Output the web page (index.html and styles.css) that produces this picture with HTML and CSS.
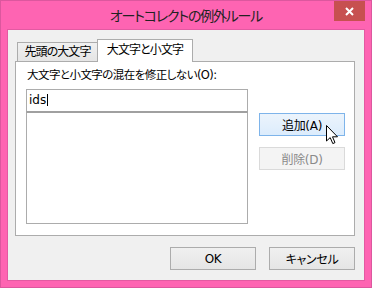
FILE: index.html
```html
<!DOCTYPE html>
<html lang="ja">
<head>
  <meta charset="UTF-8">
  <title>オートコレクトの例外ルール</title>
  <link rel="stylesheet" href="styles.css">
</head>
<body>

<div class="window">
  <div class="titlebar">
    <span></span>
    <div class="title">オートコレクトの例外ルール</div>
    <div class="close">
      <svg width="9" height="9" viewBox="0 0 9 9"><path d="M1 1 L8 8 M8 1 L1 8" stroke="#fff" stroke-width="2"/></svg>
    </div>
  </div>

  <div class="client">
    <div class="tabs">
      <div class="tab">先頭の大文字</div>
      <div class="tab active">大文字と小文字</div>
    </div>

    <div class="panel">
      <div class="label">大文字と小文字の混在を修正しない(O):</div>
      <div class="row">
        <div class="fields">
          <div class="textbox">ids<span class="caret"></span></div>
          <div class="listbox"></div>
        </div>
        <div class="side">
          <button class="btn hover">追加(A)</button>
          <button class="btn" disabled>削除(D)</button>
        </div>
      </div>
    </div>

    <div class="actions">
      <button class="btn">OK</button>
      <button class="btn">キャンセル</button>
    </div>
  </div>

  <!-- mouse pointer over the add button -->
  <svg class="cursor" width="13" height="20" viewBox="0 0 13 20">
    <path d="M0.5 0.5 V16 L4.2 12.6 L6.8 18.6 L9 17.6 L6.5 11.8 H11.5 Z" fill="#fff" stroke="#000" stroke-width="1"/>
  </svg>
</div>

</body>
</html>
```

FILE: styles.css
```css
body {
  margin: 0;
  font-family: "DejaVu Sans", "Noto Sans CJK JP", sans-serif;
  font-size: 12px;
  font-feature-settings: "palt";
  color: #000;
}
.window {
  position: relative;
  width: 372px;
  height: 288px;
  box-sizing: border-box;
  background-color: #fe64b2;
  border: 1px solid #dc579e;
  padding: 0 6px 6px;
  display: flex;
  flex-direction: column;
}
.titlebar {
  height: 28px;
  display: grid;
  grid-template-columns: 1fr auto 1fr;
}
.title {
  font-family: "Noto Sans CJK JP", sans-serif;
  font-size: 14px;
  letter-spacing: -1.2px;
  line-height: 29px;
  color: #222;
}
.close {
  justify-self: end;
  width: 31px;
  height: 20px;
  background-color: #c75050;
  display: flex;
  align-items: center;
  justify-content: center;
}
.client {
  flex: 1;
  background-color: #f0f0f0;
  border: 1px solid #e35aa2;
  padding: 9px 9px 10px 7px;
  display: flex;
  flex-direction: column;
}
.tabs {
  display: flex;
  align-items: flex-end;
  height: 23px;
  margin-bottom: -1px;
  padding-left: 2px;
  position: relative;
  z-index: 1;
}
.tab {
  box-sizing: border-box;
  width: 80px;
  height: 19px;
  margin-bottom: 1px;
  border: 1px solid #acacac;
  border-bottom: none;
  border-right: none;
  background: linear-gradient(#f0f0f0, #e5e5e5);
  text-align: center;
  line-height: 18px;
  letter-spacing: -0.9px;
}
.tab.active {
  width: 96px;
  height: 23px;
  margin-bottom: 0;
  border-right: 1px solid #acacac;
  background: #fff;
  line-height: 21px;
}
.panel {
  box-sizing: border-box;
  height: 175px;
  background-color: #fff;
  border: 1px solid #acacac;
  padding: 5px 0 0 10px;
}
.label {
  font-size: 11.5px;
  line-height: 16px;
  margin: 0 0 6px 1px;
  letter-spacing: -0.55px;
}
.row {
  display: flex;
}
.fields {
  width: 222px;
}
.textbox {
  box-sizing: border-box;
  height: 23px;
  border: 1px solid #acacac;
  border-bottom-color: #a0a0a0;
  padding-left: 2px;
  line-height: 21px;
}
.caret {
  display: inline-block;
  width: 1px;
  height: 12px;
  margin-left: 1px;
  background-color: #000;
  vertical-align: -2px;
}
.listbox {
  box-sizing: border-box;
  height: 112px;
  border: 1px solid #acacac;
  border-top-color: #a0a0a0;
}
.side {
  margin-left: 11px;
  padding-top: 24px;
  display: flex;
  flex-direction: column;
  gap: 11px;
}
.btn {
  box-sizing: border-box;
  width: 86px;
  height: 23px;
  padding: 0;
  font-family: inherit;
  font-size: 12px;
  font-feature-settings: "palt";
  letter-spacing: -0.3px;
  color: #000;
  background: linear-gradient(#f0f0f0, #e5e5e5);
  border: 1px solid #acacac;
}
.btn.hover {
  background: linear-gradient(#ecf4fc, #dcecfc);
  border-color: #7eb4ea;
}
.btn:disabled {
  background: #f4f4f4;
  border-color: #dadada;
  color: #8a8a8a;
}
.actions {
  margin-top: 11px;
  display: flex;
  justify-content: flex-end;
  gap: 13px;
}
.cursor {
  position: absolute;
  left: 325px;
  top: 124px;
}
```
